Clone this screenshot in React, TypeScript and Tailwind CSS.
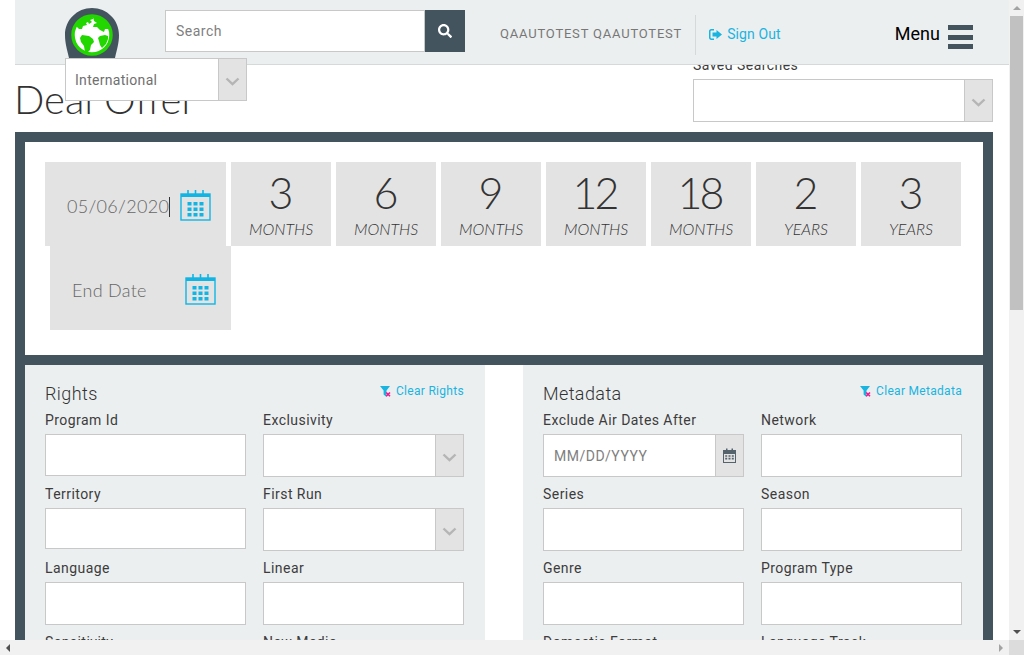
import { FaSearch } from "react-icons/fa";

const DARK = "#44545f";

function Chevron({ size = 18 }: { size?: number }) {
  return (
    <svg width={size} height={size * 0.6} viewBox="0 0 15 9" fill="none" stroke="#b5b5b5" strokeWidth="2.4">
      <path d="M1.5 1.5 7.5 7.2 13.5 1.5" />
    </svg>
  );
}

function SelectBox({ className = "" }: { className?: string }) {
  return (
    <div className={`flex border border-[#c8c8c8] bg-white ${className}`}>
      <div className="flex-1 border-r border-[#c8c8c8]" />
      <div className="flex w-[27px] items-center justify-center bg-[#e3e3e3] pt-[3px]">
        <Chevron size={15} />
      </div>
    </div>
  );
}

function Globe() {
  return (
    <svg width="54" height="58" viewBox="0 0 54 58" className="block">
      <path d="M27 0C12 0 0 12 0 27c0 8 2 14 4 23v8h46v-8c2-9 4-15 4-23C54 12 42 0 27 0Z" fill={DARK} />
      <circle cx="27" cy="27" r="19" fill="#ffffff" stroke="#22d600" strokeWidth="3.5" />
      <path d="M12 17c3-5 8-9 14-9 1 1 3 2 2 3l-3 1 2 2-3 2-1-2-2 1 1 2-4 1-1 3h-3l-2-2Z" fill="#22d600" />
      <path d="M28 9c5 0 10 2 13 6 2 2 3 4 3 6l-4 0-1 3-4-2-3-3-4 0 1-3 3-1-3-2Z" fill="#22d600" />
      <path d="M17 27l7 1 4 3 1 3-3 3-1 5-3 3-2-1-1-6-3-4-1-4Z" fill="#22d600" />
      <path d="M35 28l5-1 3 1 0 3-2 5-4 4-2-3-1-4-1-3Z" fill="#22d600" />
    </svg>
  );
}

function SignOutIcon() {
  return (
    <svg width="13" height="11" viewBox="0 0 13 11" fill="#1ab4e0">
      <path d="M5 0H2.2C1 0 0 1 0 2.2v6.6C0 10 1 11 2.2 11H5V9.5H2.4c-.5 0-.9-.4-.9-.9V2.4c0-.5.4-.9.9-.9H5Z" />
      <path d="M7.5 1 13 5.5 7.5 10V7.4H3.5V3.6h4Z" />
    </svg>
  );
}

function CalendarIcon() {
  const cells = [0, 1, 2];
  return (
    <svg width="31" height="31" viewBox="0 0 31 31" fill="none">
      <rect x="1" y="4" width="29" height="26" stroke="#11b5e4" strokeWidth="1.4" />
      <rect x="1" y="4" width="29" height="3" fill="#11b5e4" />
      <path d="M8 0v7M15.5 0v7M23 0v7" stroke="#11b5e4" strokeWidth="1.6" />
      {cells.map((r) =>
        cells.map((c) => (
          <rect key={`${r}-${c}`} x={7.5 + c * 6} y={12 + r * 5.5} width="4" height="3.5" fill="#11b5e4" />
        )),
      )}
    </svg>
  );
}

function SmallCalendar() {
  return (
    <svg width="13" height="15" viewBox="0 0 13 15" fill="#55636d">
      <path d="M0 2h13v13H0Zm1 4v8h11V6Z" fillRule="evenodd" />
      <rect x="3" y="0.5" width="1.5" height="3" />
      <rect x="8.5" y="0.5" width="1.5" height="3" />
      <path d="M2.2 7.2h2v1.6h-2Zm3.3 0h2v1.6h-2Zm3.3 0h2v1.6h-2Zm-6.6 2.6h2v1.6h-2Zm3.3 0h2v1.6h-2Zm3.3 0h2v1.6h-2Z" />
    </svg>
  );
}

function ClearIcon() {
  return (
    <svg width="11" height="11" viewBox="0 0 11 11">
      <path d="M0 0h10L6.5 4.5V11L3.6 8.5V4.5Z" fill="#1ab4e0" />
      <path d="M6.2 6.5 10 10.2M10 6.5 6.2 10.2" stroke="#ec1a8e" strokeWidth="1.6" />
    </svg>
  );
}

function Field({ label, children, inputClass = "h-[43px]" }: { label: string; children?: React.ReactNode; inputClass?: string }) {
  return (
    <div className="flex flex-col">
      <div className="h-[23px] text-[14px] leading-[18px] tracking-[0.45px] text-[#3c3c3c]">{label}</div>
      {children ?? <div className={`border border-[#c8c8c8] bg-white ${inputClass}`} />}
    </div>
  );
}

function Tile({ big, small }: { big: string; small: string }) {
  return (
    <div className="flex h-[84px] w-[100px] flex-col items-center bg-[#e3e3e3] font-[Lato,sans-serif] font-light text-[#333]">
      <div className="mt-[6px] h-[50px] pr-[3px] text-[43px] leading-[50px] tracking-[-3px]">{big}</div>
      <div className="text-[16px] italic leading-[22px]">{small}</div>
    </div>
  );
}

function DateTile({ text, caret, className = "" }: { text: string; caret?: boolean; className?: string }) {
  return (
    <div className={`flex h-[84px] w-[181px] items-center justify-between bg-[#e3e3e3] pl-[22px] pr-[15px] pt-[2px] ${className}`}>
      <span className="flex items-center pt-[3px] font-[Lato,sans-serif] text-[18px] font-light tracking-[0.3px] text-[#666]">
        {text}
        {caret && <span className="inline-block h-[20px] w-[1px] bg-[#333]" />}
      </span>
      <CalendarIcon />
    </div>
  );
}

function Section({ title, clear, children, className = "" }: { title: string; clear: string; children: React.ReactNode; className?: string }) {
  return (
    <div className={`bg-[#eceff0] pl-[20px] pr-[21px] pt-[18px] ${className}`}>
      <div className="flex h-[28px] items-start justify-between">
        <div className="text-[18px] font-light leading-[22px] tracking-[0.4px] text-[#333]">{title}</div>
        <div className="flex items-center gap-[5px] text-[12px] leading-[16px] tracking-[0.3px] text-[#1ab4e0]">
          <ClearIcon />
          {clear}
        </div>
      </div>
      <div className="grid grid-cols-[201px_201px] auto-rows-[74px] gap-x-[17px]">{children}</div>
    </div>
  );
}

export default function App() {
  return (
    <div className="flex h-[655px] w-[1024px] flex-col overflow-hidden bg-white font-[Roboto,sans-serif]">
      <div className="flex min-h-0 flex-1">
        <div className="w-[1009px] overflow-hidden pl-[15px]">
          {/* Header */}
          <header className="relative z-10 flex h-[65px] items-start border-b border-[#d6d9da] bg-[#eceff0]">
            <div className="relative ml-[50px] mt-[8px] w-[100px]">
              <Globe />
              <div className="absolute left-0 top-[50px] h-[43px] w-[182px]">
                <div className="flex h-full border border-[#c8c8c8] bg-white">
                  <div className="flex flex-1 items-center border-r border-[#c8c8c8] pl-[9px] pt-[2px] text-[14px] tracking-[0.3px] text-[#707070]">
                    International
                  </div>
                  <div className="flex w-[27px] items-center justify-center bg-[#e3e3e3] pt-[3px]">
                    <Chevron size={15} />
                  </div>
                </div>
              </div>
            </div>
            <div className="mt-[10px] flex h-[42px]">
              <div className="flex w-[260px] items-center border border-[#c8c8c8] bg-white pl-[10px] text-[14px] tracking-[0.5px] text-[#808080]">
                Search
              </div>
              <div className="flex w-[40px] items-center justify-center bg-[#44545f] text-white">
                <FaSearch size={14} />
              </div>
            </div>
            <div className="ml-[35px] mt-[26px] text-[13px] leading-[16px] tracking-[0.8px] text-[#777]">QAAUTOTEST QAAUTOTEST</div>
            <div className="ml-[13px] mt-[15px] h-[40px] w-[1px] bg-[#d6d9da]" />
            <div className="ml-[13px] mt-[26px] flex items-center gap-[5px] text-[14px] leading-[16px] tracking-[0.1px] text-[#1ab4e0]">
              <SignOutIcon />
              Sign Out
            </div>
            <div className="ml-[114px] mt-[24px] text-[18px] leading-[20px] text-black">Menu</div>
            <div className="ml-[8px] mt-[25px] flex h-[24px] w-[25px] flex-col justify-between">
              <div className="h-[5px] bg-[#44545f]" />
              <div className="h-[5px] bg-[#44545f]" />
              <div className="h-[5px] bg-[#44545f]" />
            </div>
          </header>

          {/* Title row sits partly under the header */}
          <div className="-mt-[8px] flex h-[75px] w-[978px] justify-between">
            <h1 className="-ml-[1px] pt-[17px] font-[Lato,sans-serif] text-[40px] font-light leading-[50px] text-[#333]">Deal Offer</h1>
            <div className="w-[300px]">
              <div className="h-[22px] text-[14px] leading-[16px] tracking-[0.45px] text-[#3c3c3c]">Saved Searches</div>
              <SelectBox className="h-[43px]" />
            </div>
          </div>

          {/* Main panel */}
          <div className="w-[978px] bg-[#44545f] px-[10px] pt-[10px]">
            <div className="h-[213px] bg-white pl-[20px] pt-[20px]">
              <div className="flex gap-[5px]">
                <DateTile text="05/06/2020" caret />
                <Tile big="3" small="MONTHS" />
                <Tile big="6" small="MONTHS" />
                <Tile big="9" small="MONTHS" />
                <Tile big="12" small="MONTHS" />
                <Tile big="18" small="MONTHS" />
                <Tile big="2" small="YEARS" />
                <Tile big="3" small="YEARS" />
              </div>
              <DateTile text="End Date" className="ml-[5px]" />
            </div>
            <div className="mt-[10px] flex h-[300px] bg-white">
              <Section title="Rights" clear="Clear Rights" className="w-[460px]">
                <Field label="Program Id" inputClass="h-[42px]" />
                <Field label="Exclusivity">
                  <SelectBox className="h-[43px]" />
                </Field>
                <Field label="Territory" inputClass="h-[41px]" />
                <Field label="First Run">
                  <SelectBox className="h-[43px]" />
                </Field>
                <Field label="Language" />
                <Field label="Linear" />
                <Field label="Sensitivity" />
                <Field label="New Media" />
              </Section>
              <Section title="Metadata" clear="Clear Metadata" className="ml-[38px] w-[460px]">
                <Field label="Exclude Air Dates After">
                  <div className="flex h-[43px] border border-[#c8c8c8] bg-white">
                    <div className="flex flex-1 items-center border-r border-[#c8c8c8] pl-[10px] pt-[2px] text-[14px] tracking-[0.5px] text-[#808080]">
                      MM/DD/YYYY
                    </div>
                    <div className="flex w-[27px] items-center justify-center bg-[#e3e3e3]">
                      <SmallCalendar />
                    </div>
                  </div>
                </Field>
                <Field label="Network" />
                <Field label="Series" />
                <Field label="Season" />
                <Field label="Genre" />
                <Field label="Program Type" />
                <Field label="Domestic Format" />
                <Field label="Language Track" />
              </Section>
            </div>
          </div>
        </div>

        {/* Vertical scrollbar */}
        <div className="flex w-[15px] flex-col items-center bg-[#f1f1f1]">
          <div className="flex h-[16px] items-center">
            <div className="h-0 w-0 border-x-[4px] border-b-[4px] border-x-transparent border-b-[#a3a3a3]" />
          </div>
          <div className="h-[294px] w-[13px] bg-[#c1c1c1]" />
          <div className="flex-1" />
          <div className="flex h-[16px] items-center">
            <div className="h-0 w-0 border-x-[4px] border-t-[4px] border-x-transparent border-t-[#505050]" />
          </div>
        </div>
      </div>

      {/* Horizontal scrollbar */}
      <div className="flex h-[15px] shrink-0 bg-[#f1f1f1]">
        <div className="flex w-[16px] items-center justify-center">
          <div className="h-0 w-0 border-y-[4px] border-r-[4px] border-y-transparent border-r-[#505050]" />
        </div>
        <div className="flex-1" />
        <div className="flex w-[16px] items-center justify-center">
          <div className="h-0 w-0 border-y-[4px] border-l-[4px] border-y-transparent border-l-[#a3a3a3]" />
        </div>
        <div className="w-[15px] bg-[#dcdcdc]" />
      </div>
    </div>
  );
}
